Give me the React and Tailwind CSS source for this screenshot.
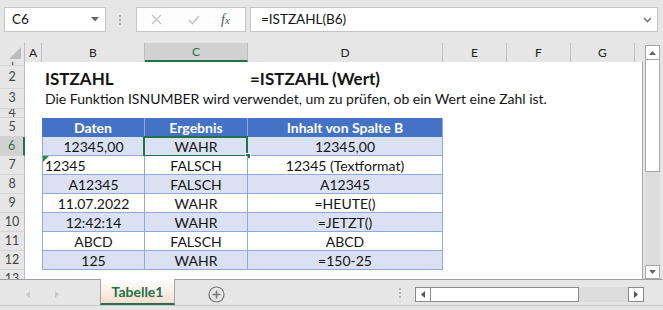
import React from "react";

const bodyRows = [
  { n: 6, b: "12345,00", c: "WAHR", d: "12345,00", blue: true },
  { n: 7, b: "12345", c: "FALSCH", d: "12345 (Textformat)", blue: false, left: true },
  { n: 8, b: "A12345", c: "FALSCH", d: "A12345", blue: true },
  { n: 9, b: "11.07.2022", c: "WAHR", d: "=HEUTE()", blue: false },
  { n: 10, b: "12:42:14", c: "WAHR", d: "=JETZT()", blue: true },
  { n: 11, b: "ABCD", c: "FALSCH", d: "ABCD", blue: false },
  { n: 12, b: "125", c: "WAHR", d: "=150-25", blue: true },
];

function RowHead({ n, h, active }) {
  return (
    <div
      className={
        "w-[25px] shrink-0 flex items-center justify-center overflow-hidden text-[12.5px] leading-none border-b border-[#d4d4d4] " +
        (active
          ? "bg-[#d2d2d2] text-[#3c6e50] border-r-2 border-r-[#217346]"
          : "bg-[#e6e6e6] text-[#444] border-r border-r-[#bcbcbc]")
      }
      style={{ height: h }}
    >
      {n}
    </div>
  );
}

function ColHead({ w, label, active }) {
  return (
    <div
      className={
        "shrink-0 h-[19px] flex items-center justify-center text-[12px] border-r border-[#bdbdbd] " +
        (active ? "bg-[#d2d2d2] text-[#217346] border-b-2 border-b-[#217346]" : "text-[#222]")
      }
      style={{ width: w }}
    >
      {label}
    </div>
  );
}

export default function App() {
  return (
    <div className="w-[663px] h-[310px] bg-[#e6e6e6] overflow-hidden flex flex-col font-['Lato',sans-serif] text-[#141414]">
      {/* Formula bar */}
      <div className="h-[43px] shrink-0 flex items-start pt-[7px] pl-[4px]">
        <div className="w-[102px] h-[25px] bg-white border border-[#c6c6c6] flex items-center justify-between pl-[7px] pr-[6px] text-[13.5px]">
          <span>C6</span>
          <svg width="8" height="5" viewBox="0 0 8 5">
            <path d="M0 0 H8 L4 4.5 Z" fill="#666" />
          </svg>
        </div>
        <div className="ml-[13px] mt-[8px] flex flex-col gap-[2px]">
          <div className="w-[2px] h-[2px] bg-[#a8a8a8]" />
          <div className="w-[2px] h-[2px] bg-[#a8a8a8]" />
          <div className="w-[2px] h-[2px] bg-[#a8a8a8]" />
        </div>
        <div className="ml-[15px] w-[110px] h-[25px] bg-[#fdfdfd] border border-[#c6c6c6] flex items-center">
          <svg className="ml-[14px]" width="11" height="11" viewBox="0 0 11 11">
            <path d="M1 1 L10 10 M10 1 L1 10" stroke="#c4c4c4" strokeWidth="1.4" />
          </svg>
          <svg className="ml-[26px]" width="12" height="10" viewBox="0 0 12 10">
            <path d="M1 5 L4.5 8.5 L11 1" stroke="#c4c4c4" strokeWidth="1.6" fill="none" />
          </svg>
          <span className="ml-[21px] font-['Liberation_Serif',serif] italic text-[14px] text-[#555] leading-none">
            f<span className="text-[11px]">x</span>
          </span>
        </div>
        <div className="ml-[4px] w-[408px] h-[25px] bg-white border border-[#c6c6c6] flex items-center justify-between pl-[10px] pr-[5px] text-[13.5px]">
          <span>=ISTZAHL(B6)</span>
          <svg width="9" height="6" viewBox="0 0 9 6">
            <path d="M1 1 L4.5 4.5 L8 1" stroke="#777" strokeWidth="1.6" fill="none" />
          </svg>
        </div>
      </div>

      {/* Main area */}
      <div className="h-[236px] shrink-0 flex">
        <div className="w-[643px] shrink-0 flex flex-col">
          {/* column headers */}
          <div className="h-[19px] shrink-0 flex">
            <div className="w-[25px] h-[19px] shrink-0 border-r border-[#bdbdbd] relative">
              <svg className="absolute left-[9px] top-[4px]" width="12" height="12" viewBox="0 0 12 12">
                <path d="M12 0 V12 H0 Z" fill="#bcbcbc" />
              </svg>
            </div>
            <ColHead w={17} label="A" />
            <ColHead w={103} label="B" />
            <ColHead w={103} label="C" active />
            <ColHead w={195} label="D" />
            <ColHead w={64} label="E" />
            <ColHead w={64} label="F" />
            <ColHead w={64} label="G" />
          </div>
          {/* body */}
          <div className="h-[217px] flex flex-col overflow-hidden">
            {/* row 1 */}
            <div className="flex h-[4px] shrink-0 overflow-hidden">
              <RowHead n={1} h={4} />
              <div className="w-[618px] bg-white border-r border-[#a6a6a6]" />
            </div>
            {/* row 2 */}
            <div className="flex h-[23px] shrink-0">
              <RowHead n={2} h={23} />
              <div className="w-[618px] bg-white border-r border-[#a6a6a6] flex items-end pb-[2px]">
                <div className="w-[17px] shrink-0" />
                <div className="w-[206px] shrink-0 pl-[3px] font-bold text-[17px] leading-none">ISTZAHL</div>
                <div className="pl-[2px] font-bold text-[17px] leading-none whitespace-nowrap">=ISTZAHL (Wert)</div>
              </div>
            </div>
            {/* row 3 */}
            <div className="flex h-[20px] shrink-0">
              <RowHead n={3} h={20} />
              <div className="w-[618px] bg-white border-r border-[#a6a6a6] flex items-end pb-[3px]">
                <div className="w-[17px] shrink-0" />
                <div className="pl-[3px] text-[14px] leading-none whitespace-nowrap">
                  Die Funktion ISNUMBER wird verwendet, um zu prüfen, ob ein Wert eine Zahl ist.
                </div>
              </div>
            </div>
            {/* row 4 */}
            <div className="flex h-[9px] shrink-0 overflow-hidden">
              <RowHead n={4} h={9} />
              <div className="w-[618px] bg-white border-r border-[#a6a6a6]" />
            </div>
            {/* row 5 header */}
            <div className="flex h-[19px] shrink-0">
              <RowHead n={5} h={19} />
              <div className="w-[618px] bg-white border-r border-[#a6a6a6] flex">
                <div className="w-[17px] shrink-0" />
                <div className="w-[103px] shrink-0 bg-[#4472c4] border-r border-[#8ea9db] text-white font-bold text-[14px] flex items-center justify-center">Daten</div>
                <div className="w-[103px] shrink-0 bg-[#4472c4] border-r border-[#8ea9db] text-white font-bold text-[14px] flex items-center justify-center">Ergebnis</div>
                <div className="w-[195px] shrink-0 bg-[#4472c4] border-r border-[#8ea9db] text-white font-bold text-[14px] flex items-center justify-center">Inhalt von Spalte B</div>
              </div>
            </div>
            {bodyRows.map((r) => (
              <div key={r.n} className="flex h-[19px] shrink-0">
                <RowHead n={r.n} h={19} active={r.n === 6} />
                <div className="w-[618px] bg-white border-r border-[#a6a6a6] flex">
                  <div className="w-[17px] shrink-0" />
                  <div
                    className={
                      "w-[103px] shrink-0 border-l border-r border-b border-[#8ea9db] text-[14px] flex items-center pt-[1px] relative " +
                      (r.left ? "justify-start pl-[2px] " : "justify-center ") +
                      (r.blue ? "bg-[#d9e1f2]" : "bg-white")
                    }
                  >
                    {r.left && (
                      <svg className="absolute left-0 top-0" width="6" height="6" viewBox="0 0 6 6">
                        <path d="M0 0 H6 L0 6 Z" fill="#1e8f3c" />
                      </svg>
                    )}
                    {r.b}
                  </div>
                  <div
                    className={
                      "w-[103px] shrink-0 border-r border-b border-[#8ea9db] text-[14px] flex items-center justify-center pt-[1px] relative " +
                      (r.blue ? "bg-[#d9e1f2]" : "bg-white")
                    }
                  >
                    {r.c}
                    {r.n === 6 && (
                      <>
                        <div className="absolute left-[-2px] top-[-1px] w-[105px] h-[21px] border-2 border-[#217346]" />
                        <div className="absolute right-[-4px] bottom-[-4px] w-[6px] h-[6px] bg-[#217346] border border-white" />
                      </>
                    )}
                  </div>
                  <div
                    className={
                      "w-[195px] shrink-0 border-r border-b border-[#8ea9db] text-[14px] flex items-center justify-center pt-[1px] " +
                      (r.blue ? "bg-[#d9e1f2]" : "bg-white")
                    }
                  >
                    {r.d}
                  </div>
                </div>
              </div>
            ))}
            {/* row 13 */}
            <div className="flex h-[19px] shrink-0">
              <RowHead n={13} h={19} />
              <div className="w-[618px] bg-white border-r border-[#a6a6a6]" />
            </div>
          </div>
        </div>
        {/* vertical scrollbar */}
        <div className="ml-[2px] w-[15px] shrink-0 flex flex-col pt-[2px]">
          <div className="h-[15px] bg-white border border-[#a6a6a6] flex items-center justify-center">
            <svg width="7" height="4" viewBox="0 0 7 4"><path d="M0 4 L3.5 0 L7 4 Z" fill="#666" /></svg>
          </div>
          <div className="h-[112px] bg-white border border-t-0 border-[#a6a6a6]" />
          <div className="flex-1 bg-[#dcdcdc]" />
          <div className="h-[14px] bg-white border border-[#a6a6a6] flex items-center justify-center">
            <svg width="7" height="4" viewBox="0 0 7 4"><path d="M0 0 L3.5 4 L7 0 Z" fill="#666" /></svg>
          </div>
        </div>
      </div>

      {/* Sheet tab bar */}
      <div className="h-[26px] shrink-0 border-t border-[#a0a0a0] flex items-start">
        <svg className="ml-[26px] mt-[11px]" width="4" height="7" viewBox="0 0 4 7"><path d="M4 0 V7 L0 3.5 Z" fill="#c8c8c8" /></svg>
        <svg className="ml-[25px] mt-[11px]" width="4" height="7" viewBox="0 0 4 7"><path d="M0 0 V7 L4 3.5 Z" fill="#c8c8c8" /></svg>
        <div className="ml-[41px] -mt-px w-[75px] h-[26px] border-l border-r border-[#a6a6a6] border-b-2 border-b-[#217346] bg-gradient-to-b from-[#ffffff] to-[#f8ddd0] flex items-center justify-center text-[14px] font-bold text-[#217346]">
          Tabelle1
        </div>
        <svg className="ml-[33px] mt-[6px]" width="17" height="17" viewBox="0 0 17 17">
          <circle cx="8.5" cy="8.5" r="7.5" stroke="#777" strokeWidth="1.2" fill="none" />
          <path d="M8.5 4.5 V12.5 M4.5 8.5 H12.5" stroke="#777" strokeWidth="1.6" />
        </svg>
        <div className="ml-[174px] mt-[8px] flex flex-col gap-[2px]">
          <div className="w-[2px] h-[2px] bg-[#b0b0b0]" />
          <div className="w-[2px] h-[2px] bg-[#b0b0b0]" />
          <div className="w-[2px] h-[2px] bg-[#b0b0b0]" />
        </div>
        <div className="ml-[14px] mt-[7px] w-[229px] h-[15px] flex">
          <div className="w-[16px] h-[15px] bg-white border border-[#8a8a8a] flex items-center justify-center">
            <svg width="4" height="7" viewBox="0 0 4 7"><path d="M4 0 V7 L0 3.5 Z" fill="#555" /></svg>
          </div>
          <div className="w-[148px] h-[15px] bg-white border border-l-0 border-[#8a8a8a]" />
          <div className="flex-1 h-[15px] bg-[#dcdcdc]" />
          <div className="w-[16px] h-[15px] bg-white border border-[#8a8a8a] flex items-center justify-center">
            <svg width="4" height="7" viewBox="0 0 4 7"><path d="M0 0 V7 L4 3.5 Z" fill="#555" /></svg>
          </div>
        </div>
      </div>
      <div className="flex-1 border-t border-[#c8c8c8]" />
    </div>
  );
}
